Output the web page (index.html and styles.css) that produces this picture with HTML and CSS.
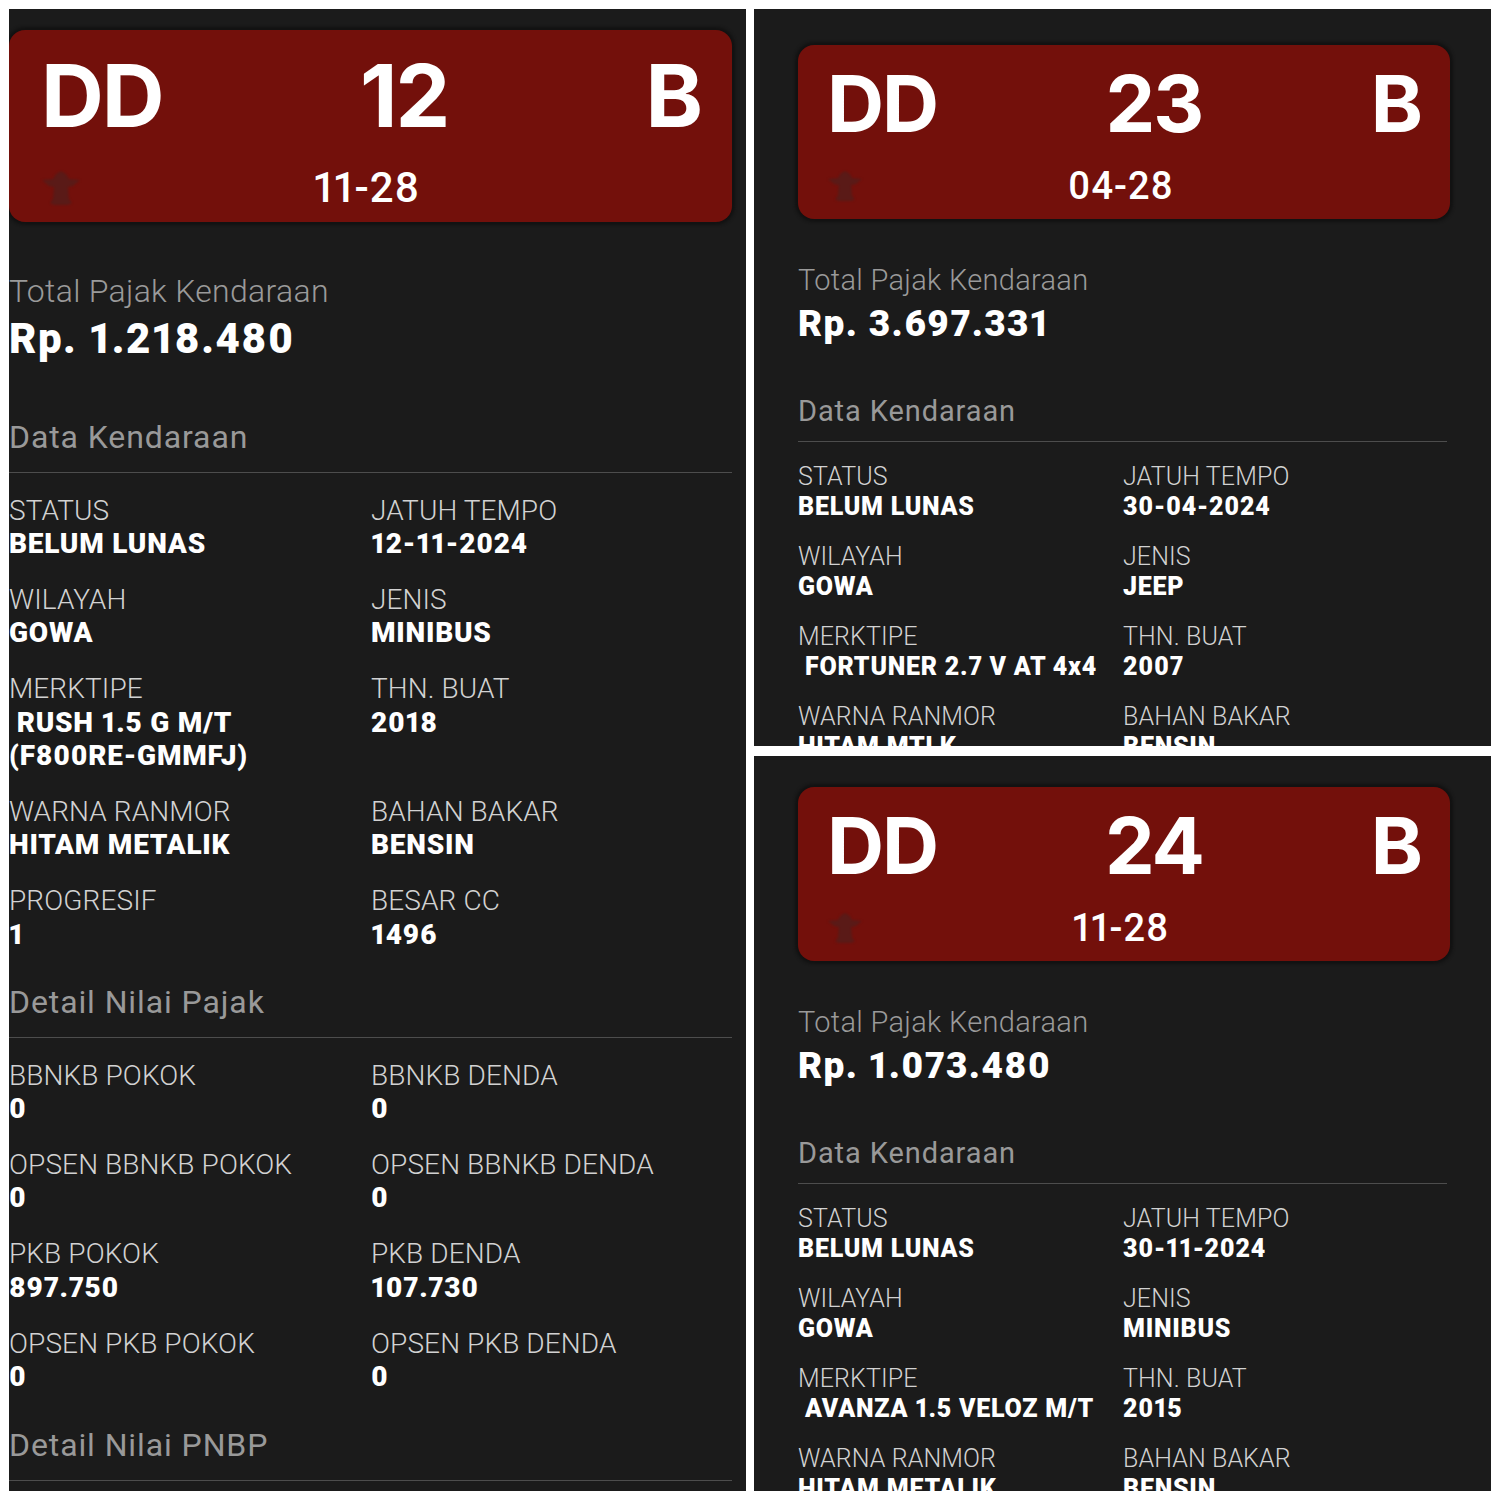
FILE: index.html
```html
<!DOCTYPE html>
<html lang="id">
<head>
    <meta charset="UTF-8">
    <title>Pajak Kendaraan</title>
    <link rel="stylesheet" href="styles.css">
</head>
<body>
    <div class="collage">
        <section class="panel panel-large">
            <div class="plate">
                <div class="plate-top"><span>DD</span><span>12</span><span>B</span></div>
                <div class="plate-bottom">
                    <svg class="emblem" viewBox="0 0 40 36"><path d="M20 1l5 3 3 5 11 1-7 6-5 1 1 12 3 4-4 2H13l-4-2 3-4 1-12-5-1-7-6 11-1 3-5z"/></svg>
                    <span class="plate-date">11-28</span>
                </div>
            </div>
            <div class="total-label">Total Pajak Kendaraan</div>
            <div class="total-value">Rp. 1.218.480</div>

            <h2 class="section-title first">Data Kendaraan</h2>
            <div class="info-grid">
                <div class="info"><div class="info-label">STATUS</div><div class="info-value">BELUM LUNAS</div></div>
                <div class="info"><div class="info-label">JATUH TEMPO</div><div class="info-value">12-11-2024</div></div>
                <div class="info"><div class="info-label">WILAYAH</div><div class="info-value">GOWA</div></div>
                <div class="info"><div class="info-label">JENIS</div><div class="info-value">MINIBUS</div></div>
                <div class="info"><div class="info-label">MERKTIPE</div><div class="info-value">&nbsp;RUSH 1.5 G M/T<br>(F800RE-GMMFJ)</div></div>
                <div class="info"><div class="info-label">THN. BUAT</div><div class="info-value">2018</div></div>
                <div class="info"><div class="info-label">WARNA RANMOR</div><div class="info-value">HITAM METALIK</div></div>
                <div class="info"><div class="info-label">BAHAN BAKAR</div><div class="info-value">BENSIN</div></div>
                <div class="info"><div class="info-label">PROGRESIF</div><div class="info-value">1</div></div>
                <div class="info"><div class="info-label">BESAR CC</div><div class="info-value">1496</div></div>
            </div>

            <h2 class="section-title">Detail Nilai Pajak</h2>
            <div class="info-grid">
                <div class="info"><div class="info-label">BBNKB POKOK</div><div class="info-value">0</div></div>
                <div class="info"><div class="info-label">BBNKB DENDA</div><div class="info-value">0</div></div>
                <div class="info"><div class="info-label">OPSEN BBNKB POKOK</div><div class="info-value">0</div></div>
                <div class="info"><div class="info-label">OPSEN BBNKB DENDA</div><div class="info-value">0</div></div>
                <div class="info"><div class="info-label">PKB POKOK</div><div class="info-value">897.750</div></div>
                <div class="info"><div class="info-label">PKB DENDA</div><div class="info-value">107.730</div></div>
                <div class="info"><div class="info-label">OPSEN PKB POKOK</div><div class="info-value">0</div></div>
                <div class="info"><div class="info-label">OPSEN PKB DENDA</div><div class="info-value">0</div></div>
            </div>

            <h2 class="section-title">Detail Nilai PNBP</h2>
        </section>

        <section class="panel panel-small">
            <div class="plate">
                <div class="plate-top"><span>DD</span><span>23</span><span>B</span></div>
                <div class="plate-bottom">
                    <svg class="emblem" viewBox="0 0 40 36"><path d="M20 1l5 3 3 5 11 1-7 6-5 1 1 12 3 4-4 2H13l-4-2 3-4 1-12-5-1-7-6 11-1 3-5z"/></svg>
                    <span class="plate-date">04-28</span>
                </div>
            </div>
            <div class="total-label">Total Pajak Kendaraan</div>
            <div class="total-value">Rp. 3.697.331</div>

            <h2 class="section-title first">Data Kendaraan</h2>
            <div class="info-grid">
                <div class="info"><div class="info-label">STATUS</div><div class="info-value">BELUM LUNAS</div></div>
                <div class="info"><div class="info-label">JATUH TEMPO</div><div class="info-value">30-04-2024</div></div>
                <div class="info"><div class="info-label">WILAYAH</div><div class="info-value">GOWA</div></div>
                <div class="info"><div class="info-label">JENIS</div><div class="info-value">JEEP</div></div>
                <div class="info"><div class="info-label">MERKTIPE</div><div class="info-value">&nbsp;FORTUNER 2.7 V AT 4x4</div></div>
                <div class="info"><div class="info-label">THN. BUAT</div><div class="info-value">2007</div></div>
                <div class="info"><div class="info-label">WARNA RANMOR</div><div class="info-value">HITAM MTLK</div></div>
                <div class="info"><div class="info-label">BAHAN BAKAR</div><div class="info-value">BENSIN</div></div>
            </div>
        </section>

        <section class="panel panel-small">
            <div class="plate">
                <div class="plate-top"><span>DD</span><span>24</span><span>B</span></div>
                <div class="plate-bottom">
                    <svg class="emblem" viewBox="0 0 40 36"><path d="M20 1l5 3 3 5 11 1-7 6-5 1 1 12 3 4-4 2H13l-4-2 3-4 1-12-5-1-7-6 11-1 3-5z"/></svg>
                    <span class="plate-date">11-28</span>
                </div>
            </div>
            <div class="total-label">Total Pajak Kendaraan</div>
            <div class="total-value">Rp. 1.073.480</div>

            <h2 class="section-title first">Data Kendaraan</h2>
            <div class="info-grid">
                <div class="info"><div class="info-label">STATUS</div><div class="info-value">BELUM LUNAS</div></div>
                <div class="info"><div class="info-label">JATUH TEMPO</div><div class="info-value">30-11-2024</div></div>
                <div class="info"><div class="info-label">WILAYAH</div><div class="info-value">GOWA</div></div>
                <div class="info"><div class="info-label">JENIS</div><div class="info-value">MINIBUS</div></div>
                <div class="info"><div class="info-label">MERKTIPE</div><div class="info-value">&nbsp;AVANZA 1.5 VELOZ M/T</div></div>
                <div class="info"><div class="info-label">THN. BUAT</div><div class="info-value">2015</div></div>
                <div class="info"><div class="info-label">WARNA RANMOR</div><div class="info-value">HITAM METALIK</div></div>
                <div class="info"><div class="info-label">BAHAN BAKAR</div><div class="info-value">BENSIN</div></div>
            </div>
        </section>
    </div>
</body>
</html>
```

FILE: styles.css
```css
* {
    box-sizing: border-box;
}
body {
    margin: 0;
    background: #fff;
    font-family: Roboto, "Liberation Sans", sans-serif;
    font-variant-numeric: proportional-nums;
}
.collage {
    display: grid;
    grid-template-columns: 737px 737px;
    grid-template-rows: 737px 735px;
    column-gap: 8px;
    row-gap: 10px;
    padding: 9px;
}
.panel {
    background: #1b1b1b;
    overflow: hidden;
}
.panel-large {
    grid-row: span 2;
    padding: 21px 14px 0 0;
}
.panel-small {
    padding: 36px 44px 0 44px;
}
.panel-small:last-child {
    padding-top: 31px;
}
.plate {
    background: #73100b;
    border-radius: 16px;
    box-shadow: 0 0 3px 3px #121212;
    color: #fff;
    font-weight: 700;
}
.plate-top {
    display: flex;
    justify-content: space-between;
    font-family: Inter, Roboto, sans-serif;
    font-weight: 700;
    letter-spacing: -2px;
    line-height: 1;
}
.plate-bottom {
    display: grid;
    grid-template-columns: 1fr auto 1fr;
    align-items: center;
}
.emblem {
    fill: #5a1a17;
    filter: blur(1px);
}
.plate-date {
    font-weight: 500;
    letter-spacing: 1px;
    line-height: 1;
}
.total-label {
    color: #9a9a9a;
    font-weight: 300;
    letter-spacing: 0.3px;
}
.total-value {
    color: #fff;
    font-weight: 900;
}
.section-title {
    margin: 0;
    border-bottom: 1px solid #4d4d4d;
    color: #999;
    font-weight: 400;
    letter-spacing: 0.9px;
}
.info-grid {
    display: grid;
    grid-template-columns: 1fr 1fr;
}
.info-label {
    color: #d2d2d2;
    font-weight: 300;
    letter-spacing: 0.1px;
}
.info-value {
    color: #fff;
    font-weight: 900;
    letter-spacing: 0.75px;
}

/* kiri, skala besar */
.panel-large .plate {
    height: 192px;
    padding: 22px 31px 0 32px;
}
.panel-large .plate-top {
    font-size: 87px;
}
.panel-large .plate-bottom {
    margin-top: 28px;
    padding-right: 8px;
}
.panel-large .plate-date {
    font-size: 42px;
}
.panel-large .emblem {
    width: 40px;
    height: 36px;
}
.panel-large .total-label {
    margin-top: 49px;
    font-size: 32px;
    line-height: 40px;
}
.panel-large .total-value {
    margin-top: 4px;
    font-size: 42px;
    letter-spacing: 1.5px;
    line-height: 48px;
}
.panel-large .section-title {
    margin-top: 31px;
    padding-bottom: 15px;
    font-size: 32px;
    line-height: 40px;
}
.panel-large .section-title.first {
    margin-top: 54px;
}
.panel-large .info-grid {
    grid-template-columns: 362px 1fr;
    row-gap: 22.3px;
    padding-top: 20.5px;
}
.panel-large .info-label,
.panel-large .info-value {
    font-size: 28px;
    line-height: 33.5px;
}

/* kanan, skala kecil */
.panel-small .plate {
    height: 174px;
    margin-right: -3px;
    padding: 19px 29px 0;
}
.panel-small .plate-top {
    font-size: 79px;
}
.panel-small .plate-bottom {
    margin-top: 24px;
    padding-right: 6px;
}
.panel-small .plate-date {
    font-size: 38px;
}
.panel-small .emblem {
    width: 36px;
    height: 32px;
}
.panel-small .total-label {
    margin-top: 43px;
    font-size: 29px;
    line-height: 36px;
}
.panel-small .total-value {
    margin-top: 4px;
    font-size: 37px;
    letter-spacing: 1.35px;
    line-height: 44px;
}
.panel-small .section-title {
    margin-top: 47px;
    padding-bottom: 12px;
    font-size: 29px;
    line-height: 36px;
}
.panel-small .info-grid {
    grid-template-columns: 325px 1fr;
    row-gap: 20px;
    padding-top: 20px;
}
.panel-small .info-label,
.panel-small .info-value {
    font-size: 25px;
    line-height: 30px;
}
```
